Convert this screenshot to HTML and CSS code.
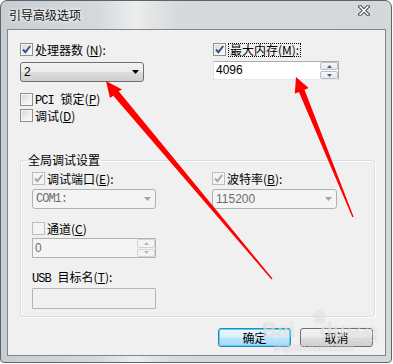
FILE: index.html
```html
<!DOCTYPE html>
<html>
<head>
    <meta charset="UTF-8">
    <title>引导高级选项</title>
    <link rel="stylesheet" href="styles.css">
</head>
<body>
    <div class="window">
        <div class="titlebar">
            <span class="title">引导高级选项</span>
            <svg class="close" width="12" height="11" viewBox="0 0 12 11">
                <path d="M2 1.5L10 9.5M10 1.5L2 9.5" stroke="#3b3f44" stroke-width="3.4" stroke-linecap="square"/>
                <path d="M2 1.5L10 9.5M10 1.5L2 9.5" stroke="#fff" stroke-width="1.6" stroke-linecap="square"/>
            </svg>
        </div>

        <div class="client">
            <div class="top">
                <div class="col">
                    <label class="check">
                        <span class="box"><svg width="11" height="11" viewBox="0 0 11 11"><path d="M2 5.5L4.4 8.2L9.2 2" class="tick"/></svg></span>
                        <span>处理器数 (<u>N</u>):</span>
                    </label>
                    <div class="combo cpu">
                        <span>2</span>
                        <svg width="7" height="4" viewBox="0 0 7 4"><path d="M0 0H7L3.5 4Z" fill="#000"/></svg>
                    </div>
                    <label class="check pci">
                        <span class="box"></span>
                        <span><span class="latin sp">PCI</span>锁定(<u>P</u>)</span>
                    </label>
                    <label class="check debug">
                        <span class="box"></span>
                        <span>调试(<u>D</u>)</span>
                    </label>
                </div>
                <div class="col right">
                    <label class="check">
                        <span class="box"><svg width="11" height="11" viewBox="0 0 11 11"><path d="M2 5.5L4.4 8.2L9.2 2" class="tick"/></svg></span>
                        <span class="focus">最大内存(<u>M</u>):</span>
                    </label>
                    <div class="spin mem">
                        <span class="value">4096</span>
                        <span class="spin-btns">
                            <span class="sb"><svg width="5" height="3" viewBox="0 0 5 3"><path d="M0 3H5L2.5 0Z"/></svg></span>
                            <span class="sb"><svg width="5" height="3" viewBox="0 0 5 3"><path d="M0 0H5L2.5 3Z"/></svg></span>
                        </span>
                    </div>
                </div>
            </div>

            <fieldset class="group">
                <legend>全局调试设置</legend>
                <div class="group-grid">
                    <div class="col">
                        <label class="check">
                            <span class="box disabled"><svg width="11" height="11" viewBox="0 0 11 11"><path d="M2 5.5L4.4 8.2L9.2 2" class="tick"/></svg></span>
                            <span>调试端口(<u>E</u>):</span>
                        </label>
                        <div class="combo off">
                            <span class="latin">COM1:</span>
                            <svg width="7" height="4" viewBox="0 0 7 4"><path d="M0 0H7L3.5 4Z"/></svg>
                        </div>
                        <label class="check channel">
                            <span class="box disabled"></span>
                            <span>通道(<u>C</u>)</span>
                        </label>
                        <div class="spin off chan">
                            <span class="value">0</span>
                            <span class="spin-btns">
                                <span class="sb"><svg width="5" height="3" viewBox="0 0 5 3"><path d="M0 3H5L2.5 0Z"/></svg></span>
                                <span class="sb"><svg width="5" height="3" viewBox="0 0 5 3"><path d="M0 0H5L2.5 3Z"/></svg></span>
                            </span>
                        </div>
                        <div class="usb-label"><span class="latin sp">USB</span>目标名(<u>T</u>):</div>
                        <div class="textbox off"></div>
                    </div>
                    <div class="col">
                        <label class="check">
                            <span class="box disabled"><svg width="11" height="11" viewBox="0 0 11 11"><path d="M2 5.5L4.4 8.2L9.2 2" class="tick"/></svg></span>
                            <span>波特率(<u>B</u>):</span>
                        </label>
                        <div class="combo off baud">
                            <span>115200</span>
                            <svg width="7" height="4" viewBox="0 0 7 4"><path d="M0 0H7L3.5 4Z"/></svg>
                        </div>
                    </div>
                </div>
            </fieldset>

            <div class="buttons">
                <button class="btn default">确定</button>
                <button class="btn">取消</button>
            </div>
        </div>
    </div>

    <div class="watermark">
        <span class="paw">&#x2740;</span>
        <span class="wm-bai">Bai</span><span class="wm-du">du</span><span class="wm-jy">经验</span>
        <span class="wm-url">jingyan.baidu.com</span>
    </div>

    <svg class="arrows" width="393" height="364" viewBox="0 0 393 364">
        <polygon points="106,81 122,89.5 118.7,91.3 272.5,278.6 271.5,279.4 113.3,95.7 110,98" fill="#ff0000"/>
        <polygon points="296,77 308.6,88.1 304.5,89.8 353.6,216.8 352.4,217.2 298.9,92 294.8,93.7" fill="#ff0000"/>
    </svg>
</body>
</html>
```

FILE: styles.css
```css
* { box-sizing: border-box; }

body {
    margin: 0;
    width: 393px;
    height: 364px;
    position: relative;
    overflow: hidden;
    background: #ffffff;
    font-family: "Noto Sans CJK SC", "DejaVu Sans", sans-serif;
    font-size: 12px;
    color: #000;
}

u { text-decoration: underline; }
.latin { font-family: "Liberation Mono", monospace; font-size: 12px; letter-spacing: -1px; }
.latin.sp { margin-right: 7px; }

/* window frame */
.window {
    width: 392px;
    height: 363px;
    border: 1px solid #5e6369;
    border-radius: 7px 7px 4px 4px;
    padding: 0 5px 6px 6px;
    display: flex;
    flex-direction: column;
    background:
        linear-gradient(to right, #c9cdd1 0%, #d6d9dc 25%, #eceeee 35%, #e4e6e6 38%, #d7dadc 45%, #d5d8db 100%);
}
.titlebar {
    height: 28px;
    flex-shrink: 0;
    display: flex;
    justify-content: space-between;
    align-items: flex-start;
}
.title {
    margin: 6px 0 0 2px;
    line-height: 16px;
    font-size: 12px;
    color: #111;
    text-shadow: 0 0 5px #fff, 0 0 3px #fff;
}
.close { margin: 4px 16px 0 0; }

/* client area */
.client {
    flex: 1;
    border: 1px solid #83878c;
    background: #f0f0f0;
    display: flex;
    flex-direction: column;
}
.top {
    display: grid;
    grid-template-columns: 192px 1fr;
    padding: 13px 0 0 12px;
}
.col { display: flex; flex-direction: column; align-items: flex-start; }
.right { padding-left: 1px; }

/* checkbox */
.check {
    display: flex;
    align-items: center;
    gap: 2px;
    height: 13px;
    line-height: 13px;
    white-space: nowrap;
}
.box {
    width: 13px;
    height: 13px;
    flex-shrink: 0;
    border: 1px solid #8e8f8f;
    background: linear-gradient(135deg, #d3d6da 0%, #eef0f2 60%, #fbfbfb 100%);
    box-shadow: inset 0 0 0 1px #f6f6f6;
}
.box svg { display: block; }
.tick { fill: none; stroke: #3c4f86; stroke-width: 1.9; }
.box.disabled {
    border-color: #bdbdbd;
    background: #f4f4f4;
    box-shadow: none;
}
.box.disabled .tick { stroke: #a8a8a8; }
.focus { border: 1px dotted #000; padding: 0 1px; line-height: 12px; }
.pci { margin-top: 11px; }
.debug { margin-top: 3px; }

/* combo boxes */
.combo {
    width: 124px;
    height: 20px;
    margin-top: 6px;
    border: 1px solid #707070;
    border-radius: 3px;
    display: flex;
    align-items: center;
    justify-content: space-between;
    padding: 0 4px 0 3px;
    font-family: "Liberation Sans", sans-serif;
    background: linear-gradient(#f2f2f2 0%, #ebebeb 48%, #dddddd 52%, #cfcfcf 100%);
}
.combo svg { display: block; }
.combo.off {
    margin-top: 4px;
    border-color: #adb2b5;
    background: #f4f4f4;
    color: #6d6d6d;
}
.combo.off svg path { fill: #a5a5a5; }
.baud { width: 125px; }

/* spin boxes */
.spin {
    width: 126px;
    height: 19px;
    margin-top: 5px;
    display: flex;
    border: 1px solid #abadb3;
    border-left-color: #e2e3ea;
    border-bottom-color: #e3e9ef;
    background: #fff;
}
.spin .value {
    flex: 1;
    padding-left: 2px;
    line-height: 17px;
    font-family: "Liberation Sans", sans-serif;
}
.spin-btns {
    width: 18px;
    display: flex;
    flex-direction: column;
    gap: 1px;
}
.sb {
    flex: 1;
    display: flex;
    align-items: center;
    justify-content: center;
    border: 1px solid #b9bec6;
    border-radius: 2px;
    background: linear-gradient(#f6f7f8, #e4e7ea);
}
.sb svg { display: block; fill: #4e5f86; }
.spin.off {
    width: 124px;
    height: 20px;
    margin-top: 3px;
    border-color: #b1b1b1;
    background: #f4f4f4;
    color: #6d6d6d;
}
.spin.off .sb { border-color: #d3d3d3; background: #f4f4f4; }
.spin.off .sb svg { fill: #b5b5b5; }
.spin.off .value { line-height: 18px; }

/* group box */
.group {
    margin: 31px 10px 0 12px;
    padding: 5px 11px 7px 11px;
    border: 1px solid #d5dfe5;
    border-radius: 3px;
    box-shadow: 1px 1px 0 #fff, inset 1px 1px 0 #fff;
}
.group legend {
    margin-left: -5px;
    padding: 0 1px;
    line-height: 14px;
}
.group-grid { display: grid; grid-template-columns: 180px 1fr; }
.channel { margin-top: 13px; }
.usb-label { margin-top: 12px; line-height: 13px; white-space: nowrap; }
.textbox {
    width: 124px;
    height: 21px;
    margin-top: 2px;
    border: 1px solid #b5b5b5;
    background: #f0f0f0;
    border-radius: 1px;
}

/* buttons */
.buttons {
    display: flex;
    justify-content: flex-end;
    gap: 9px;
    margin: 11px 12px 0 0;
}
.btn {
    width: 73px;
    height: 19px;
    padding: 0;
    font-family: inherit;
    font-size: 12px;
    line-height: 15px;
    color: #000;
    border: 1px solid #707070;
    border-radius: 3px;
    background: linear-gradient(#f2f2f2 0%, #ebebeb 48%, #dddddd 52%, #cfcfcf 100%);
}
.btn.default {
    border-color: #3c7fb1;
    box-shadow: inset 0 0 0 1px #48d8fb;
    background: linear-gradient(#eaf6fd 0%, #d9f0fc 48%, #bee6fd 52%, #a7d9f5 100%);
}

/* overlays from the screenshot */
.arrows { position: absolute; left: 0; top: 0; pointer-events: none; }
.watermark {
    position: absolute;
    left: 262px;
    top: 306px;
    width: 120px;
    height: 50px;
    pointer-events: none;
    color: rgba(255, 255, 255, 0.55);
    text-shadow: 0 0 1px rgba(120, 120, 120, 0.35);
    font-family: "Liberation Sans", sans-serif;
}
.paw { position: absolute; left: 50px; top: 0; font-size: 18px; }
.wm-bai { position: absolute; left: 0; top: 12px; font-size: 21px; font-weight: bold; }
.wm-du { position: absolute; left: 58px; top: 12px; font-size: 21px; font-weight: bold; }
.wm-jy { position: absolute; left: 84px; top: 15px; font-size: 16px; font-family: "Noto Sans CJK SC", sans-serif; }
.wm-url { position: absolute; left: 12px; top: 36px; font-size: 10px; }
```
